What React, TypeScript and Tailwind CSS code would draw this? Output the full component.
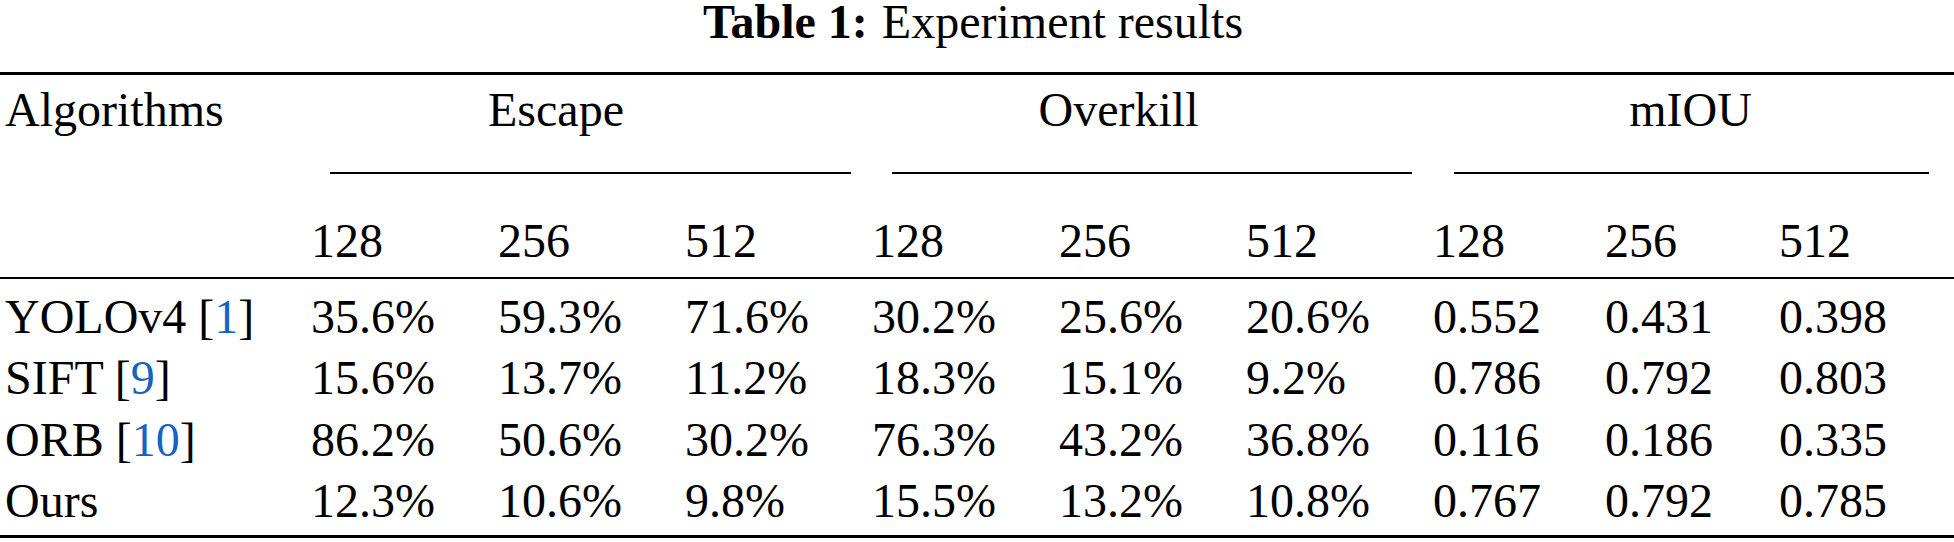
const groups = [
  { name: "Escape", pad: "pr-[71px]", line: "ml-[19px] mr-[21px]" },
  { name: "Overkill", pad: "pr-[68px]", line: "ml-[20px] mr-[21px]" },
  { name: "mIOU", pad: "pr-[5px]", line: "ml-[21px] mr-[24px]" },
];

const sizes = ["128", "256", "512", "128", "256", "512", "128", "256", "512"];

const rows = [
  { name: "YOLOv4", cite: "1", values: ["35.6%", "59.3%", "71.6%", "30.2%", "25.6%", "20.6%", "0.552", "0.431", "0.398"] },
  { name: "SIFT", cite: "9", values: ["15.6%", "13.7%", "11.2%", "18.3%", "15.1%", "9.2%", "0.786", "0.792", "0.803"] },
  { name: "ORB", cite: "10", values: ["86.2%", "50.6%", "30.2%", "76.3%", "43.2%", "36.8%", "0.116", "0.186", "0.335"] },
  { name: "Ours", cite: "", values: ["12.3%", "10.6%", "9.8%", "15.5%", "13.2%", "10.8%", "0.767", "0.792", "0.785"] },
];

const cols =
  "grid grid-cols-[306px_187px_187px_187px_187px_187px_187px_172px_174px_174px] pl-[5px]";

export default function App() {
  return (
    <div className="w-[1954px] h-[542px] overflow-hidden bg-white text-black font-['Liberation_Serif','Times_New_Roman',serif]">
      {/* Caption */}
      <div className="h-[72px] pr-[8px] text-center text-[48px] leading-[44px]">
        <span className="font-bold">Table 1:</span>
        <span className="ml-[14px]">Experiment results</span>
      </div>

      <div className="h-[3px] bg-black" />

      {/* Header */}
      <div className="pt-[4px] text-[48px]">
        <div className={cols}>
          <div className="leading-[61px]">Algorithms</div>
          {groups.map((g) => (
            <div key={g.name} className={`col-span-3 text-center leading-[61px] ${g.pad}`}>
              {g.name}
            </div>
          ))}
        </div>
        <div className={`${cols} mt-[32px]`}>
          <div />
          {groups.map((g) => (
            <div key={g.name} className="col-span-3">
              <div className={`h-[2px] bg-black ${g.line}`} />
            </div>
          ))}
        </div>
        <div className={`${cols} mt-[36px]`}>
          <div />
          {sizes.map((s, i) => (
            <div key={i} className="leading-[61px]">
              {s}
            </div>
          ))}
        </div>
      </div>

      <div className="mt-[6px] h-[2px] bg-black" />

      {/* Body */}
      <div className="pt-[7px] text-[48px]">
        {rows.map((r) => (
          <div key={r.name} className={cols}>
            <div className="leading-[61.3px] whitespace-nowrap">
              {r.name}
              {r.cite && (
                <>
                  {" "}[<span className="text-[#1565c0]">{r.cite}</span>]
                </>
              )}
            </div>
            {r.values.map((v, i) => (
              <div key={i} className="leading-[61.3px]">
                {v}
              </div>
            ))}
          </div>
        ))}
      </div>

      <div className="mt-[3.5px] h-[3px] bg-black" />
    </div>
  );
}
